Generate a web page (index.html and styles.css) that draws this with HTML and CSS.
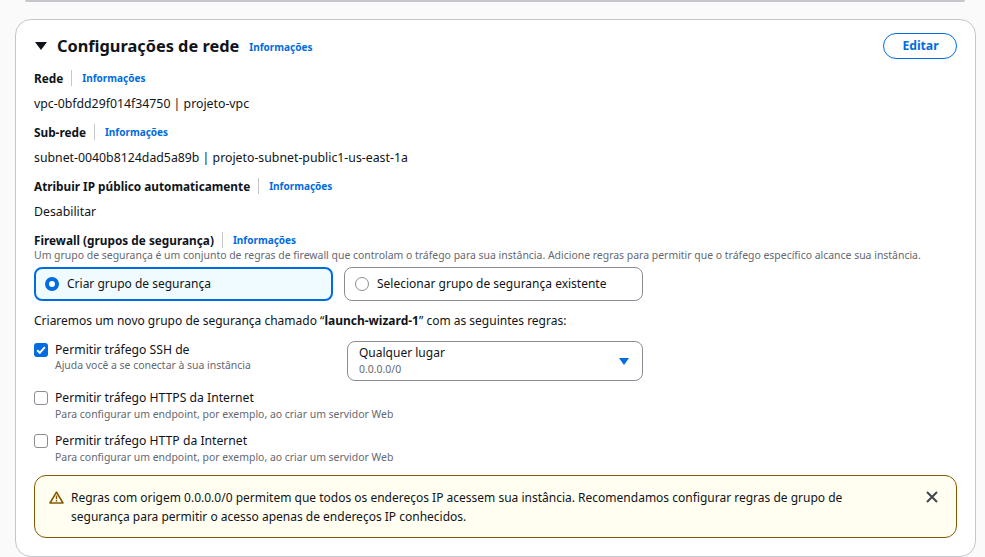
FILE: index.html
```html
<!DOCTYPE html>
<html lang="pt">
<head>
<meta charset="utf-8">
<title>Configurações de rede</title>
<link rel="stylesheet" href="styles.css">
</head>
<body>
<div class="prev-card"></div>
<section class="card">
  <header class="card-head">
    <svg class="caret" width="14" height="10" viewBox="0 0 14 10"><path d="M1 1h12L7 9z" fill="#0f141a"/></svg>
    <h2 class="title">Configurações de rede</h2>
    <a class="info info-title">Informações</a>
    <button class="edit">Editar</button>
  </header>

  <div class="field">
    <div class="label-row"><span class="label">Rede</span><a class="info">Informações</a></div>
    <div class="value">vpc-0bfdd29f014f34750 | projeto-vpc</div>
  </div>
  <div class="field">
    <div class="label-row"><span class="label">Sub-rede</span><a class="info">Informações</a></div>
    <div class="value">subnet-0040b8124dad5a89b | projeto-subnet-public1-us-east-1a</div>
  </div>
  <div class="field">
    <div class="label-row"><span class="label">Atribuir IP público automaticamente</span><a class="info">Informações</a></div>
    <div class="value">Desabilitar</div>
  </div>

  <div class="label-row"><span class="label">Firewall (grupos de segurança)</span><a class="info">Informações</a></div>
  <p class="desc">Um grupo de segurança é um conjunto de regras de firewall que controlam o tráfego para sua instância. Adicione regras para permitir que o tráfego específico alcance sua instância.</p>

  <div class="tiles">
    <div class="tile tile-on"><span class="radio radio-on"></span><span>Criar grupo de segurança</span></div>
    <div class="tile"><span class="radio"></span><span>Selecionar grupo de segurança existente</span></div>
  </div>

  <p class="intro">Criaremos um novo grupo de segurança chamado “<b>launch-wizard-1</b>” com as seguintes regras:</p>

  <div class="rule rule-ssh">
    <div class="check-item">
      <span class="box box-on"><svg width="14" height="14" viewBox="0 0 14 14"><path d="M3.2 7.2l2.6 2.6 5-5.6" fill="none" stroke="#fff" stroke-width="2"/></svg></span>
      <div><div class="check-label">Permitir tráfego SSH de</div><div class="desc">Ajuda você a se conectar à sua instância</div></div>
    </div>
    <div class="select">
      <div><div class="sel-main">Qualquer lugar</div><div class="sel-sub">0.0.0.0/0</div></div>
      <svg width="10" height="7" viewBox="0 0 10 7"><path d="M0 0h10L5 7z" fill="#006ce0"/></svg>
    </div>
  </div>
  <div class="check-item rule">
    <span class="box"></span>
    <div><div class="check-label">Permitir tráfego HTTPS da Internet</div><div class="desc desc-low">Para configurar um endpoint, por exemplo, ao criar um servidor Web</div></div>
  </div>
  <div class="check-item rule">
    <span class="box"></span>
    <div><div class="check-label">Permitir tráfego HTTP da Internet</div><div class="desc desc-low">Para configurar um endpoint, por exemplo, ao criar um servidor Web</div></div>
  </div>

  <div class="alert">
    <svg class="warn" width="15" height="13" viewBox="0 0 15 13"><path d="M7.5 1.2L1 12h13z" fill="none" stroke="#855900" stroke-width="1.6" stroke-linejoin="round"/><path d="M7.5 4.5v3.8M7.5 9v1.6" stroke="#855900" stroke-width="1.4" fill="none"/></svg>
    <p class="alert-text">Regras com origem 0.0.0.0/0 permitem que todos os endereços IP acessem sua instância. Recomendamos configurar regras de grupo de segurança para permitir o acesso apenas de endereços IP conhecidos.</p>
    <svg class="close" width="14" height="14" viewBox="0 0 14 14"><path d="M2 2l10 10M12 2L2 12" stroke="#424650" stroke-width="2" fill="none"/></svg>
  </div>
</section>
</body>
</html>
```

FILE: styles.css
```css
* { box-sizing: border-box; }
html, body { margin: 0; padding: 0; }
body {
  width: 985px;
  height: 557px;
  overflow: hidden;
  background: #fafafb;
  font-family: "Noto Sans", sans-serif;
  font-size: 12px;
  line-height: 16px;
  color: #0f141a;
}
p { margin: 0; }
.prev-card {
  height: 2px;
  margin: 0 20px 0 25px;
  background: #c6c6cd;
  border-radius: 0 0 6px 6px;
}
.card {
  margin: 17px 9px 0 15px;
  height: 538px;
  padding: 0 18px;
  background: #fff;
  border: 1px solid #c6c6cd;
  border-radius: 16px;
}
.card-head {
  display: flex;
  align-items: center;
  height: 50px;
  padding-top: 1px;
}
.caret { margin-right: 9px; }
.title { margin: 0 10px 0 0; font-size: 16.35px; line-height: 24px; font-weight: 700; }
.info { font-size: 10px; font-weight: 700; color: #006ce0; }
.info-title { margin-top: 3px; }
.edit {
  margin-left: auto;
  width: 74px;
  height: 26px;
  padding: 0 0 0 1px;
  border: 1px solid #006ce0;
  border-radius: 13px;
  background: #fff;
  color: #006ce0;
  font: 700 12.2px/16px "Noto Sans", sans-serif;
}
.field { margin-bottom: 10px; }
.label-row { display: flex; align-items: center; height: 16px; }
.label { font-size: 11.8px; font-weight: 700; padding-right: 8px; border-right: 1px solid #c6c6cd; margin-right: 10px; }
.value { margin-top: 10px; height: 18px; font-size: 12.3px; }
.desc { font-size: 10.44px; line-height: 14px; color: #656871; white-space: nowrap; }
.desc-low { margin: 1px 0 -1px; }
.tiles { display: flex; gap: 11px; margin-top: 5px; }
.tile {
  display: flex;
  align-items: center;
  gap: 8px;
  width: 299px;
  height: 34px;
  padding: 0 10px;
  border: 1px solid #8c8c94;
  border-radius: 8px;
}
.tile-on { padding: 0 9px; border: 2px solid #006ce0; background: #f0fbff; }
.radio { flex: none; width: 14px; height: 14px; border: 1px solid #8c8c94; border-radius: 50%; background: #fff; }
.radio-on { border: 4px solid #006ce0; }
.intro { margin-top: 12px; }
.rule { margin-top: 13px; }
.rule-ssh { display: flex; align-items: flex-start; justify-content: space-between; width: 609px; margin-top: 12px; }
.check-item { display: flex; gap: 7px; }
.rule-ssh .check-item { margin-top: 1px; }
.check-label { font-size: 12.18px; }
.box { flex: none; width: 14px; height: 14px; margin-top: 1px; border: 1px solid #8c8c94; border-radius: 3px; background: #fff; }
.box-on { border: 0; background: #006ce0; display: block; }
.select {
  display: flex; align-items: center; justify-content: space-between;
  width: 296px; height: 40px; margin-bottom: -4px; padding: 0 13px 0 11px;
  border: 1px solid #8c8c94; border-radius: 8px;
}
.sel-main { line-height: 16px; }
.sel-sub { font-size: 10.44px; line-height: 15px; margin-top: 1px; color: #656871; }
.alert {
  display: flex; align-items: flex-start;
  margin-top: 12px; height: 63px; padding: 12px 17px 0 14px;
  border: 1px solid #855900; border-radius: 12px;
  background: #fffef0;
}
.warn { flex: none; margin: 3px 7px 0 0; }
.alert-text { width: 800px; line-height: 19px; }
.close { margin: 2px 0 0 auto; }
```
